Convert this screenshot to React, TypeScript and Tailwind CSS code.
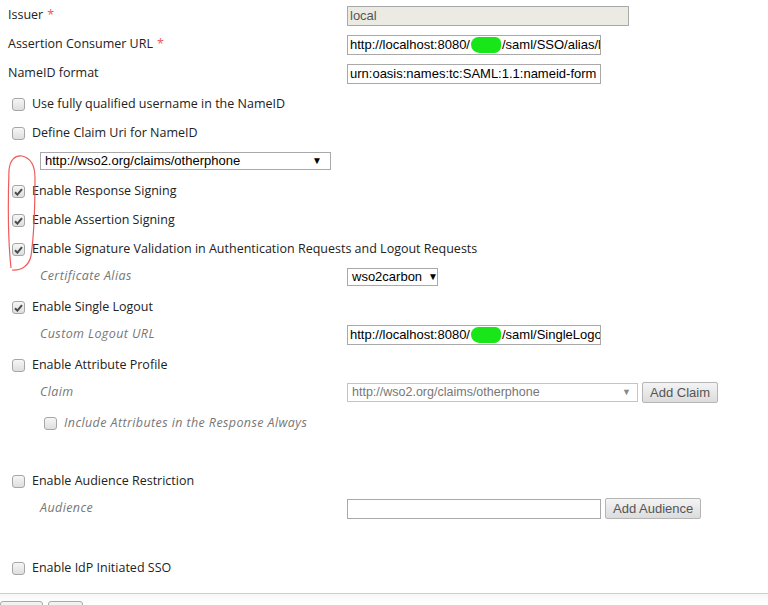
import React from 'react';

const labelFont = { fontFamily: '"Open Sans", "DejaVu Sans", sans-serif' };
const inputFont = { fontFamily: '"Liberation Sans", Arial, sans-serif' };

function Check({ checked = false }: { checked?: boolean }) {
  return (
    <span className="relative inline-flex h-[13px] w-[13px] shrink-0 items-center justify-center rounded-[3px] border border-[#a6a6a6] bg-gradient-to-b from-[#f6f6f6] to-[#dedede]">
      {checked && (
        <svg width="9" height="8" viewBox="0 0 9 8" className="block">
          <path d="M1 4.2 L3.4 6.6 L8 1.2" fill="none" stroke="#4a4a4a" strokeWidth="2" />
        </svg>
      )}
    </span>
  );
}

// checkbox rows sit ~2px lower than the field rows
function CheckRow({ label, checked }: { label: string; checked?: boolean }) {
  return (
    <div className="flex h-[29px] items-center gap-[7px] pl-3 pt-[4px]">
      <Check checked={checked} />
      <span className="text-[12.5px] text-[#222]" style={labelFont}>
        {label}
      </span>
    </div>
  );
}

function FieldRow({ label, required, italic, children }: { label: string; required?: boolean; italic?: boolean; children?: React.ReactNode }) {
  return (
    <div className="flex h-[29px] items-center">
      <div
        className={`w-[347px] shrink-0 text-[12.5px] ${italic ? 'pl-10 italic tracking-[0.4px] text-[#777]' : 'pl-2 text-[#222]'}`}
        style={labelFont}
      >
        {label}
        {required && <span className="ml-1 text-[#e8585a]">*</span>}
      </div>
      <div className="flex items-center gap-1">{children}</div>
    </div>
  );
}

function TextBox({ value, rest, width = 'w-[254px]', disabled }: { value: string; rest?: string; width?: string; disabled?: boolean }) {
  return (
    <div
      className={`flex h-[20px] ${width} items-center overflow-hidden whitespace-nowrap border border-[#a9a9a9] px-[2px] text-[13px] ${disabled ? 'bg-[#ebebe4] text-[#555]' : 'bg-white text-black'}`}
      style={inputFont}
    >
      <span>{value}</span>
      {rest !== undefined && (
        <>
          <span className="mx-[1px] inline-block h-[16px] w-[30px] shrink-0 rounded-[8px_6px_7px_9px] bg-[#19e619]" />
          <span>{rest}</span>
        </>
      )}
    </div>
  );
}

function GrayButton({ children }: { children: React.ReactNode }) {
  return (
    <button
      className="h-[21px] rounded-[2px] border border-[#b5b5b5] bg-gradient-to-b from-[#f4f4f4] to-[#dcdcdc] px-[7px] text-[13px] text-[#555]"
      style={inputFont}
    >
      {children}
    </button>
  );
}

export default function App() {
  return (
    <div className="relative h-[605px] w-[768px] overflow-hidden bg-white">
      <div className="flex flex-col pt-px">
        <FieldRow label="Issuer" required>
          <TextBox value="local" width="w-[282px]" disabled />
        </FieldRow>
        <FieldRow label="Assertion Consumer URL" required>
          <TextBox value="http://localhost:8080/" rest="/saml/SSO/alias/l" />
        </FieldRow>
        <FieldRow label="NameID format">
          <TextBox value="urn:oasis:names:tc:SAML:1.1:nameid-form" />
        </FieldRow>
        <CheckRow label="Use fully qualified username in the NameID" />
        <CheckRow label="Define Claim Uri for NameID" />
        <div className="flex h-[29px] items-center pl-10">
          <div
            className="flex h-[18px] w-[291px] items-center justify-between border border-[#a9a9a9] bg-white pl-1 pr-[8px] text-[13px] text-black"
            style={inputFont}
          >
            <span>http://wso2.org/claims/otherphone</span>
            <span className="text-[10px]">▼</span>
          </div>
        </div>
        <CheckRow label="Enable Response Signing" checked />
        <CheckRow label="Enable Assertion Signing" checked />
        <CheckRow label="Enable Signature Validation in Authentication Requests and Logout Requests" checked />
        <FieldRow label="Certificate Alias" italic>
          <div
            className="flex h-[18px] w-[91px] items-center gap-[6px] border border-[#a9a9a9] bg-white pl-1 text-[13px] text-black"
            style={inputFont}
          >
            <span>wso2carbon</span>
            <span className="text-[10px]">▼</span>
          </div>
        </FieldRow>
        <CheckRow label="Enable Single Logout" checked />
        <FieldRow label="Custom Logout URL" italic>
          <TextBox value="http://localhost:8080/" rest="/saml/SingleLogou" />
        </FieldRow>
        <CheckRow label="Enable Attribute Profile" />
        <FieldRow label="Claim" italic>
          <div
            className="flex h-[19px] w-[291px] items-center justify-between border border-[#c4c4c4] bg-white pl-1 pr-[6px] text-[12.5px] text-[#777]"
            style={inputFont}
          >
            <span>http://wso2.org/claims/otherphone</span>
            <span className="text-[9px] text-[#888]">▼</span>
          </div>
          <GrayButton>Add Claim</GrayButton>
        </FieldRow>
        <div className="flex h-[29px] items-center gap-[7px] pl-11 pt-[4px]">
          <Check />
          <span className="text-[12.5px] italic tracking-[0.4px] text-[#777]" style={labelFont}>
            Include Attributes in the Response Always
          </span>
        </div>
        <div className="h-[29px]" />
        <CheckRow label="Enable Audience Restriction" />
        <FieldRow label="Audience" italic>
          <TextBox value="" />
          <GrayButton>Add Audience</GrayButton>
        </FieldRow>
        <div className="h-[29px]" />
        <CheckRow label="Enable IdP Initiated SSO" />
      </div>

      {/* footer bar */}
      <div className="absolute left-0 right-0 top-[593px] h-[12px] border-t border-[#cfcfcf] bg-gradient-to-b from-[#f7f7f7] to-white">
        <div className="flex gap-[5px] pt-[7px]">
          <span className="h-[10px] w-[43px] rounded-t-[3px] border border-[#aaa] bg-[#f2f2f2]" />
          <span className="h-[10px] w-[35px] rounded-t-[3px] border border-[#aaa] bg-[#f2f2f2]" />
        </div>
      </div>

      {/* hand-drawn annotation */}
      <svg className="pointer-events-none absolute left-0 top-0" width="60" height="290" viewBox="0 0 60 290">
        <path
          d="M11 268 C8 240 8 200 9 170 C10 160 15 155 22 156 C31 158 35 166 35 178 C35 205 34 235 31 256 C29 265 22 271 12 270"
          fill="none"
          stroke="#f05a5a"
          strokeWidth="1.2"
        />
      </svg>
    </div>
  );
}
